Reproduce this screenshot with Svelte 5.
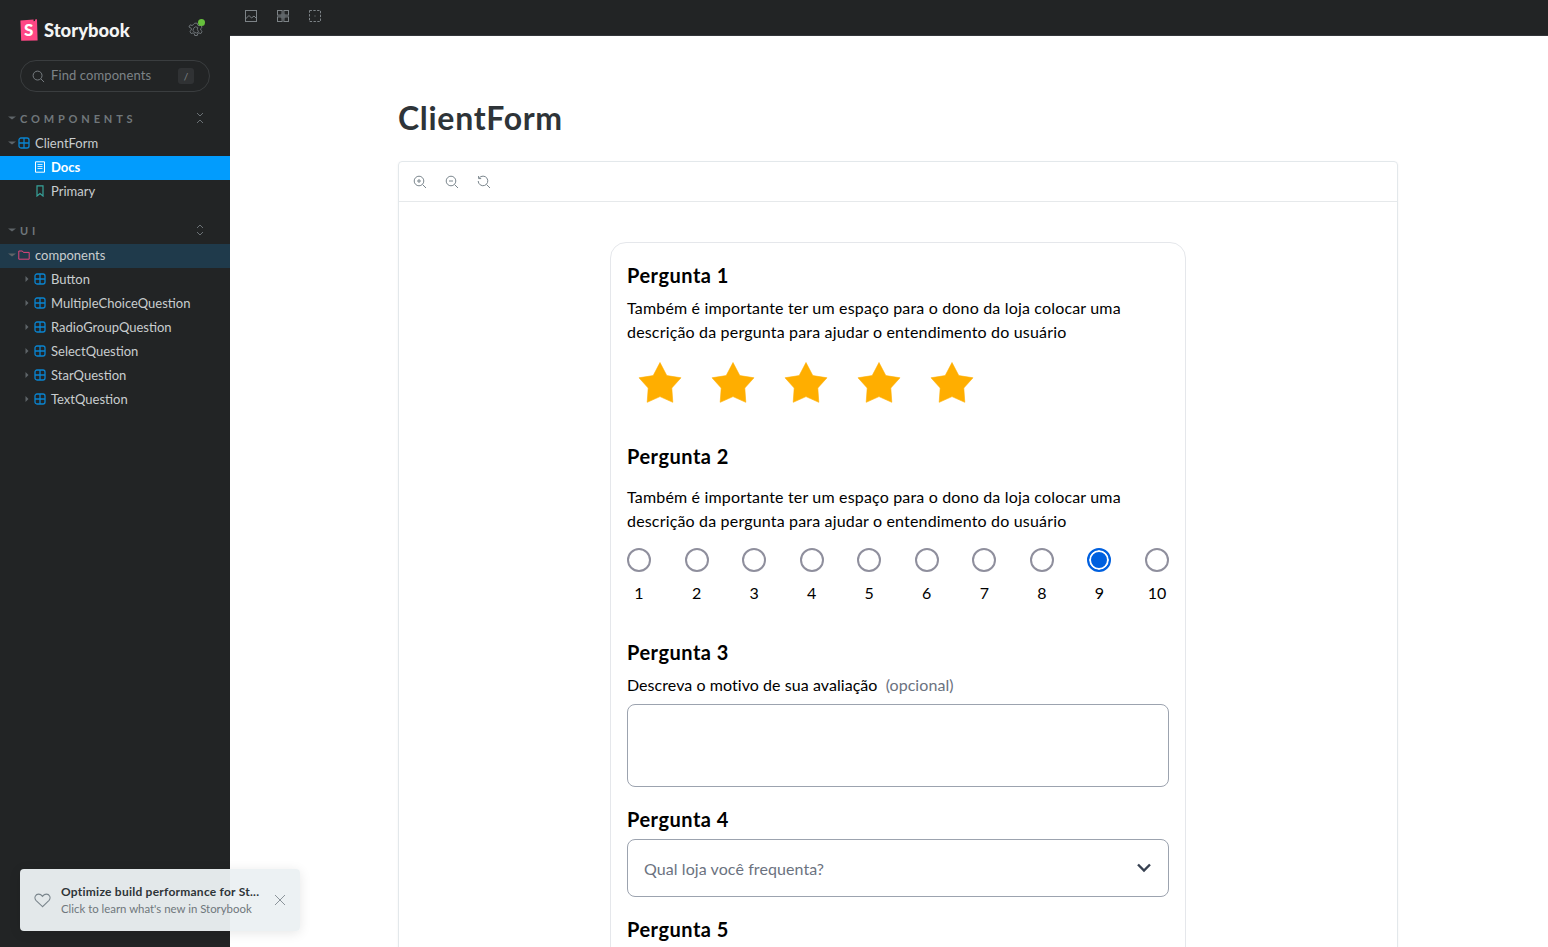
<script>
  const stories = ['Button', 'MultipleChoiceQuestion', 'RadioGroupQuestion', 'SelectQuestion', 'StarQuestion', 'TextQuestion'];
  const scale = [1, 2, 3, 4, 5, 6, 7, 8, 9, 10];
  const stars = [1, 2, 3, 4, 5];
  const description = 'Também é importante ter um espaço para o dono da loja colocar uma descrição da pergunta para ajudar o entendimento do usuário';
</script>

{#snippet componentIcon()}
  <svg class="ico" viewBox="0 0 12 12" fill="none" stroke="#0a84d0" stroke-width="1.3">
    <rect x="1" y="1" width="10" height="10" rx="2" />
    <path d="M6 1v10M1 6h10" />
  </svg>
{/snippet}

{#snippet caretDown()}
  <svg class="caret" viewBox="0 0 8 8"><path d="M0 2.5h8L4 5.5z" fill="#5e6468" /></svg>
{/snippet}

<div class="shell">
  <aside class="sidebar">
    <div class="brand">
      <svg class="logo" viewBox="0 0 18 22">
        <path d="M0.4 1.4 13.6.6l-.1 1.6 1.5-.1.1-1.7L17 .3l.6 21.2L1.2 21.7z" fill="#ff4785" />
        <text x="8.8" y="17" text-anchor="middle" font-size="17" font-weight="900" fill="#fff" font-family="Lato, sans-serif">S</text>
      </svg>
      <span class="wordmark">Storybook</span>
      <div class="cog">
        <svg viewBox="0 0 16 16" fill="none" stroke="#6d7377" stroke-width="1">
          <path d="M6.7 1.2h2.6l.4 1.9 1.3.7 1.8-.7 1.3 2.2-1.4 1.3v1.5l1.4 1.3-1.3 2.2-1.8-.7-1.3.7-.4 1.9H6.7l-.4-1.9-1.3-.7-1.8.7-1.3-2.2 1.4-1.3V6.3L.9 5l1.3-2.2 1.8.7 1.3-.7z" />
          <path d="M9.8 5.4a3 3 0 1 0 .8 4.2 3.4 3.4 0 0 1-.8-4.2z" />
        </svg>
        <span class="dot"></span>
      </div>
    </div>

    <div class="search">
      <svg class="search-ico" viewBox="0 0 14 14" fill="none" stroke="#7d8387" stroke-width="1">
        <circle cx="6" cy="6" r="4.8" />
        <path d="M9.6 9.6 13 13" />
      </svg>
      <span class="placeholder">Find components</span>
      <kbd>/</kbd>
    </div>

    <div class="section first">
      {@render caretDown()}
      <span class="section-name">COMPONENTS</span>
      <svg class="expander" viewBox="0 0 10 12" fill="none" stroke="#6b7175" stroke-width="1">
        <path d="M2 1l3 3 3-3M2 11l3-3 3 3" />
      </svg>
    </div>
    <div class="row depth0">
      {@render caretDown()}
      {@render componentIcon()}
      <span>ClientForm</span>
    </div>
    <div class="row depth1 selected">
      <svg class="ico" viewBox="0 0 12 12" fill="none" stroke="#fff" stroke-width="1">
        <path d="M1.5.8h9v10.4h-9z" />
        <path d="M3.5 3.5h5M3.5 5.5h5M3.5 7.5h5" stroke="#cdeaff" />
      </svg>
      <strong>Docs</strong>
    </div>
    <div class="row depth1">
      <svg class="ico" viewBox="0 0 12 12" fill="none" stroke="#37a39a" stroke-width="1.2">
        <path d="M3 .8h6v10.2L6 8.6 3 11z" />
      </svg>
      <span>Primary</span>
    </div>

    <div class="section second">
      {@render caretDown()}
      <span class="section-name">UI</span>
      <svg class="expander" viewBox="0 0 10 12" fill="none" stroke="#6b7175" stroke-width="1">
        <path d="M2 4l3-3 3 3M2 8l3 3 3-3" />
      </svg>
    </div>
    <div class="row depth0 active-folder">
      {@render caretDown()}
      <svg class="ico" viewBox="0 0 12 12" fill="none" stroke="#e0457b" stroke-width="1">
        <path d="M.8 2h3.6l1 1.4h5.8v6.8H.8z" />
      </svg>
      <span>components</span>
    </div>
    {#each stories as story}
      <div class="row depth1 nested">
        <svg class="mini-caret" viewBox="0 0 4 6"><path d="M.5 0 3.5 3 .5 6z" fill="#5e6468" /></svg>
        {@render componentIcon()}
        <span>{story}</span>
      </div>
    {/each}
  </aside>

  <div class="main">
    <div class="topbar">
      <svg class="tool" viewBox="0 0 14 14" fill="none" stroke="#7d8387" stroke-width="1">
        <rect x="1.5" y="1.5" width="11" height="11" />
        <path d="M1.5 10 5 6.5l2.5 2.5L10 7l2.5 2.5" />
      </svg>
      <svg class="tool" viewBox="0 0 14 14" fill="none" stroke="#7d8387" stroke-width="1">
        <rect x="1.5" y="1.5" width="4.6" height="4.6" />
        <rect x="7.9" y="1.5" width="4.6" height="4.6" />
        <rect x="1.5" y="7.9" width="4.6" height="4.6" />
        <rect x="7.9" y="7.9" width="4.6" height="4.6" />
        <path d="M4.5 7h5M7 4.5v5" stroke="#5f6569" stroke-width="3" />
      </svg>
      <svg class="tool" viewBox="0 0 14 14" fill="none" stroke="#7d8387" stroke-width="1">
        <rect x="1.5" y="1.5" width="11" height="11" stroke-dasharray="2.4 1.4" />
        <path d="M6.5 7h1" />
      </svg>
    </div>

    <div class="docs">
      <h1>ClientForm</h1>
      <div class="canvas">
        <div class="canvas-tools">
          <svg class="tool-light" viewBox="0 0 14 14" fill="none" stroke="#7b868d" stroke-width="1">
            <circle cx="6" cy="6" r="4.8" /><path d="M9.6 9.6 13 13M4 6h4M6 4v4" />
          </svg>
          <svg class="tool-light" viewBox="0 0 14 14" fill="none" stroke="#7b868d" stroke-width="1">
            <circle cx="6" cy="6" r="4.8" /><path d="M9.6 9.6 13 13M4 6h4" />
          </svg>
          <svg class="tool-light" viewBox="0 0 14 14" fill="none" stroke="#7b868d" stroke-width="1">
            <path d="M2.2 3A4.8 4.8 0 1 1 1.2 6M9.6 9.6 13 13M1.6 1v2.6h2.6" />
          </svg>
        </div>
        <div class="stage">
          <form class="card">
            <h2>Pergunta 1</h2>
            <p class="desc">{description}</p>
            <div class="stars">
              {#each stars as s}
                <svg class="star" viewBox="0 0 44 42">
                  <path d="M22 .5 28.8 13.6 43 15.8 33.8 26l1 14.3L22 34.6 9.2 40.3l1-14.3L1 15.8l14.2-2.2z" fill="#ffae00" stroke="#ffae00" stroke-width=".6" stroke-linejoin="round" />
                </svg>
              {/each}
            </div>

            <h2 class="q2">Pergunta 2</h2>
            <p class="desc spaced">{description}</p>
            <div class="radios">
              {#each scale as n}
                <div class="radio-col">
                  <span class="radio" class:on={n === 9}></span>
                  <span class="radio-label">{n}</span>
                </div>
              {/each}
            </div>

            <h2 class="q3">Pergunta 3</h2>
            <div class="label">Descreva o motivo de sua avaliação <span class="optional">(opcional)</span></div>
            <div class="textarea"></div>

            <h2 class="q4">Pergunta 4</h2>
            <div class="select">
              <span>Qual loja você frequenta?</span>
              <svg viewBox="0 0 14 10" fill="none" stroke="#374151" stroke-width="2.4">
                <path d="M1 1.5 7 7.5l6-6" />
              </svg>
            </div>

            <h2 class="q5">Pergunta 5</h2>
          </form>
        </div>
      </div>
    </div>
  </div>

  <div class="toast">
    <svg class="heart" viewBox="0 0 18 16" fill="none" stroke="#7b868d" stroke-width="1.1">
      <path d="M9 14.6 2 7.8C-.4 5 1.6 1.2 4.8 1.2 6.6 1.2 8 2.2 9 3.6c1-1.4 2.4-2.4 4.2-2.4 3.2 0 5.2 3.8 2.8 6.6z" />
    </svg>
    <div class="toast-text">
      <div class="toast-title">Optimize build performance for St...</div>
      <div class="toast-sub">Click to learn what's new in Storybook</div>
    </div>
    <svg class="close" viewBox="0 0 12 12" fill="none" stroke="#8b949a" stroke-width="1">
      <path d="M1 1l10 10M11 1 1 11" />
    </svg>
  </div>
</div>

<style>
  :global(body) {
    margin: 0;
    overflow: hidden;
    font-family: Lato, "Noto Sans", sans-serif;
  }
  .shell {
    display: flex;
    height: 947px;
    overflow: hidden;
    position: relative;
  }
  .sidebar {
    width: 230px;
    flex: none;
    background: #222425;
    color: #c9cdcf;
    font-size: 13px;
  }
  .brand {
    display: flex;
    align-items: center;
    height: 22px;
    padding: 19px 26px 0 20px;
  }
  .logo {
    width: 18px;
    height: 22px;
  }
  .wordmark {
    margin-left: 6px;
    margin-top: -1px;
    font-size: 18.4px;
    font-weight: 900;
    color: #f4f5f5;
  }
  .cog {
    margin-left: auto;
    position: relative;
    width: 16px;
    height: 16px;
  }
  .cog svg {
    display: block;
    width: 16px;
    height: 16px;
  }
  .dot {
    position: absolute;
    top: -3px;
    right: -1px;
    width: 7px;
    height: 7px;
    border-radius: 50%;
    background: #66bf3c;
  }
  .search {
    display: flex;
    align-items: center;
    height: 30px;
    margin: 19px 20px 0;
    padding: 0 15px 0 11px;
    border: 1px solid #3a3d3f;
    border-radius: 16px;
    color: #7d8387;
  }
  .search-ico {
    width: 13px;
    height: 13px;
    margin-right: 6px;
  }
  .placeholder {
    flex: 1;
    padding-bottom: 2px;
    letter-spacing: 0.1px;
  }
  kbd {
    width: 16px;
    height: 16px;
    border-radius: 3px;
    background: #303234;
    font: 10px Lato, sans-serif;
    text-align: center;
    line-height: 16px;
    color: #7d8387;
  }
  .section {
    box-sizing: border-box;
    display: flex;
    align-items: center;
    height: 24px;
    padding: 0 0 4px 8px;
    color: #70777b;
  }
  .section.first {
    margin-top: 16px;
  }
  .section.second {
    margin-top: 16px;
  }
  .section-name {
    margin-left: 4px;
    font-size: 11px;
    font-weight: 700;
    letter-spacing: 0.35em;
  }
  .expander {
    margin-left: auto;
    margin-right: 25px;
    width: 10px;
    height: 12px;
  }
  .caret {
    width: 8px;
    height: 8px;
    flex: none;
  }
  .row {
    box-sizing: border-box;
    display: flex;
    align-items: center;
    height: 24px;
    padding-bottom: 2px;
    white-space: nowrap;
  }
  .depth0 {
    padding-left: 8px;
  }
  .depth0 .ico {
    margin-left: 2px;
  }
  .depth1 {
    padding-left: 34px;
  }
  .depth1.nested {
    padding-left: 25px;
  }
  .mini-caret {
    width: 4px;
    height: 6px;
    margin-right: 5px;
  }
  .ico {
    width: 12px;
    height: 12px;
    margin-right: 5px;
    flex: none;
  }
  .selected {
    background: #029cfd;
    color: #fff;
  }
  .active-folder {
    background: #1f3a4b;
  }
  .main {
    flex: 1;
    min-width: 0;
    background: #fff;
  }
  .topbar {
    display: flex;
    align-items: center;
    gap: 18px;
    height: 35px;
    padding-left: 14px;
    background: #222425;
    border-bottom: 1px solid #33363a;
  }
  .tool {
    width: 14px;
    height: 14px;
    margin-bottom: 4px;
  }
  .docs {
    width: 1000px;
    margin-left: 168px;
    padding-top: 60px;
  }
  h1 {
    margin: 0 0 21px;
    height: 44px;
    font-size: 32px;
    line-height: 44px;
    font-weight: 700;
    letter-spacing: 0.7px;
    color: #2e3438;
  }
  .canvas {
    border: 1px solid #e3e8eb;
    border-radius: 4px;
    box-shadow: 0 1px 3px rgba(0, 0, 0, 0.05);
  }
  .canvas-tools {
    display: flex;
    align-items: center;
    gap: 18px;
    height: 39px;
    padding-left: 14px;
    border-bottom: 1px solid #e6e9eb;
  }
  .tool-light {
    width: 14px;
    height: 14px;
  }
  .stage {
    padding: 40px 0 0;
  }
  .card {
    width: 542px;
    margin: 0 auto;
    padding: 18px 16px 40px;
    border: 1px solid #e5e7eb;
    border-radius: 16px;
    color: #000;
  }
  h2 {
    margin: 0;
    font-size: 20px;
    line-height: 28px;
    font-weight: 700;
    letter-spacing: 0.5px;
  }
  .desc {
    margin: 7px 0 0;
    font-size: 16px;
    line-height: 24px;
    letter-spacing: 0.17px;
  }
  .desc.spaced {
    margin-top: 15px;
  }
  .stars {
    display: flex;
    gap: 29px;
    margin-top: 18px;
    padding-left: 10.5px;
  }
  .star {
    width: 44px;
    height: 42px;
    display: block;
  }
  .q2 {
    margin-top: 38px;
  }
  .radios {
    display: flex;
    justify-content: space-between;
    margin-top: 15px;
  }
  .radio-col {
    display: flex;
    flex-direction: column;
    align-items: center;
    width: 24px;
  }
  .radio {
    box-sizing: border-box;
    width: 24px;
    height: 24px;
    border: 2px solid #8f8f9d;
    border-radius: 50%;
    background: #fff;
  }
  .radio.on {
    border-color: #0060df;
    background: #0060df;
    box-shadow: inset 0 0 0 2px #fff;
  }
  .radio-label {
    margin-top: 9px;
    font-size: 16px;
    line-height: 24px;
  }
  .q3 {
    margin-top: 33px;
  }
  .label {
    margin-top: 7px;
    font-size: 16px;
    line-height: 24px;
    letter-spacing: 0.06px;
  }
  .optional {
    margin-left: 4px;
    color: #6b7280;
  }
  .textarea {
    box-sizing: border-box;
    height: 83px;
    margin-top: 7px;
    border: 1px solid #9ca3af;
    border-radius: 8px;
  }
  .q4 {
    margin-top: 18px;
  }
  .select {
    box-sizing: border-box;
    display: flex;
    align-items: center;
    justify-content: space-between;
    height: 58px;
    margin-top: 6px;
    padding: 0 17px 0 16px;
    border: 1px solid #9ca3af;
    border-radius: 8px;
    color: #6b7280;
    font-size: 16px;
    letter-spacing: 0.08px;
  }
  .select svg {
    width: 14px;
    height: 10px;
  }
  .q5 {
    margin-top: 18px;
  }
  .toast {
    position: absolute;
    left: 20px;
    top: 869px;
    display: flex;
    align-items: center;
    box-sizing: border-box;
    width: 280px;
    height: 62px;
    padding: 0 14px;
    border-radius: 4px;
    background: rgba(235, 240, 243, 0.96);
    box-shadow: 0 2px 12px rgba(0, 0, 0, 0.1);
  }
  .heart {
    width: 17px;
    height: 15px;
    flex: none;
  }
  .toast-text {
    margin-left: 10px;
    flex: 1;
    white-space: nowrap;
    overflow: hidden;
  }
  .toast-title {
    font-size: 12px;
    font-weight: 700;
    line-height: 16px;
    letter-spacing: 0.24px;
    color: #2e3438;
  }
  .toast-sub {
    margin-top: 1px;
    font-size: 11.4px;
    line-height: 16px;
    color: #6f777c;
  }
  .close {
    width: 12px;
    height: 12px;
    flex: none;
  }
</style>
